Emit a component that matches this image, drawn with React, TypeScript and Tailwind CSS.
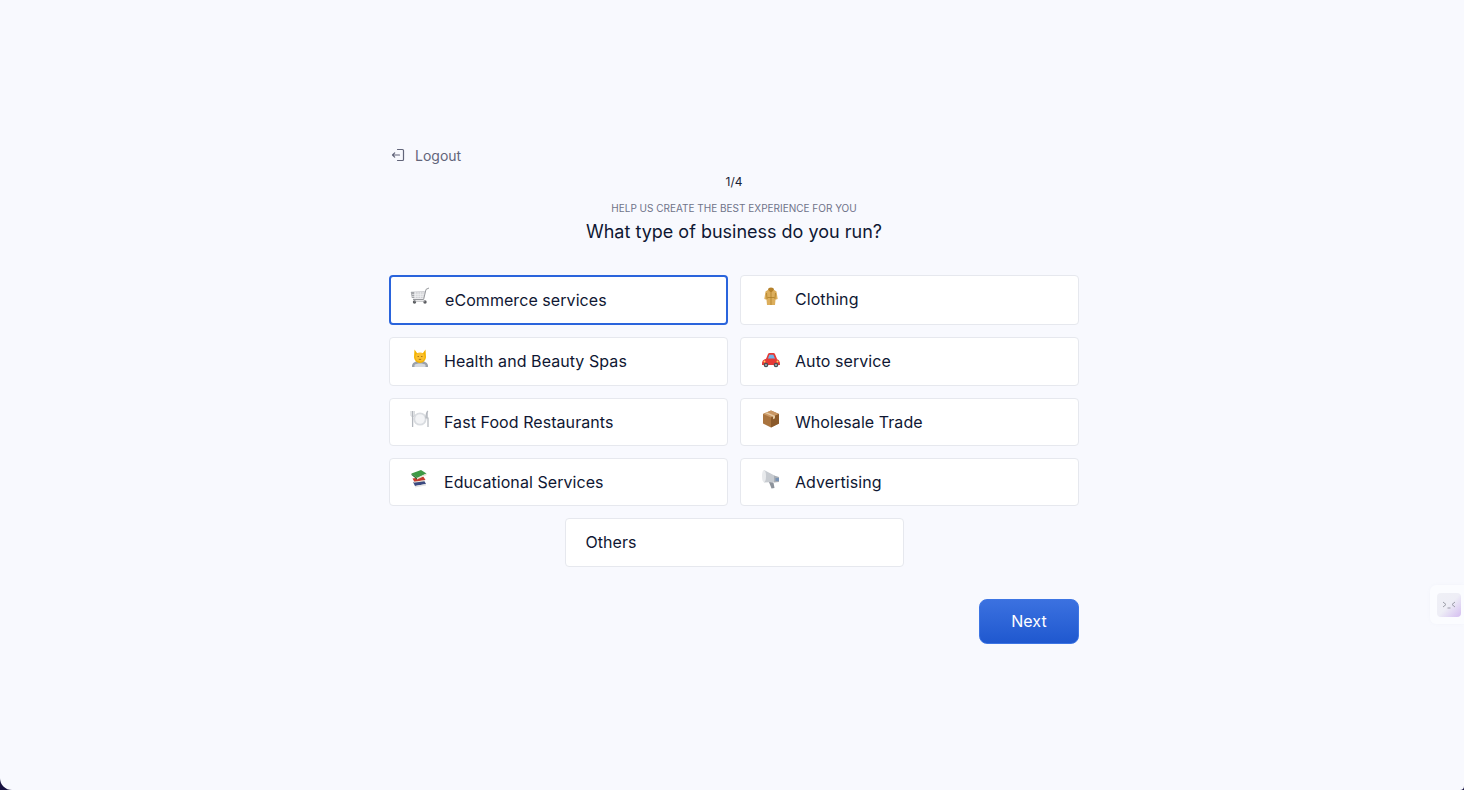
import React from "react";

const Cart = () => (
  <svg width="20" height="18" viewBox="0 0 20 18" fill="none">
    <path d="M1 5 L14.500 4.500 L13.500 11 L3 11 Z" fill="#d8d9dc" stroke="#bcbec2" strokeWidth="0.6" />
    <path d="M1 5h3v6H1.800z" fill="#a3a5a9" />
    <path d="M5.500 5v6M8 5v6M10.500 5v6M13 5v6M2 7.500h12M2 9.500h11.500" stroke="#f2f2f3" strokeWidth="0.6" />
    <path d="M19 1 L16 2.400 L13.600 12.500 L3 12.500" stroke="#96989c" strokeWidth="1" />
    <circle cx="4.500" cy="15" r="1.700" fill="#5c5e62" />
    <circle cx="15" cy="15" r="1.700" fill="#5c5e62" />
    <path d="M4.500 14.200h10.500" stroke="#a6a8ac" strokeWidth="0.8" />
  </svg>
);
const Spa = () => (
  <svg width="20" height="20" viewBox="0 0 20 20" fill="none">
    <path d="M2 18c0-3 3-5 8-5s8 2 8 5v1H2z" fill="#9aa1ab" />
    <path d="M4.500 17c1.500-2 9.500-2 11 0v2h-11z" fill="#d5d8dd" />
    <path d="M4.500 1.500 L7 5h6l2.500-3.500L16 9c0 3-3 6-6 6s-6-3-6-6z" fill="#f4b400" />
    <circle cx="10" cy="9" r="4.600" fill="#fbc02d" />
    <path d="M7.500 8.500h1.500M11 8.500h1.500M8.800 11.400h2.400" stroke="#8a5a12" strokeWidth="0.7" />
  </svg>
);
const Plate = () => (
  <svg width="20" height="20" viewBox="0 0 20 20" fill="none">
    <circle cx="10" cy="10" r="6.600" fill="#d9dce0" />
    <circle cx="10" cy="10" r="4.800" fill="#f3f4f6" />
    <path d="M2.600 2v16" stroke="#b3b7bd" strokeWidth="1.300" />
    <path d="M1 2v4c0 1.200 1 1.700 1.600 1.700S4.200 7.200 4.200 6V2" stroke="#b3b7bd" strokeWidth="0.7" />
    <path d="M18 2c-1.500 1-2 3-2 7h2v9" stroke="#b3b7bd" strokeWidth="1.200" fill="#c9ccd1" />
  </svg>
);
const Books = () => (
  <svg width="20" height="20" viewBox="0 0 20 20" fill="none">
    <path d="M3 13l11-1.500 2 3.500-11 2z" fill="#3b4a80" />
    <path d="M5 17l11-2v1.500L5 18.600z" fill="#e4e4e4" />
    <path d="M2.500 9.500l11-1.800 2 3.300-11 2z" fill="#c63b2f" />
    <path d="M3.500 12.800l11-1.600v1l-11 1.600z" fill="#efe7d6" />
    <path d="M1.500 4.500 L11 1l5.500 3.500L7 9z" fill="#3f9a46" />
    <path d="M1.500 4.500 L7 9v1.600L1.500 6z" fill="#2a6f33" />
    <path d="M7 9l9.500-4.500v1.400L7 10.600z" fill="#e9e4d2" />
  </svg>
);
const Coat = () => (
  <svg width="20" height="20" viewBox="0 0 20 20" fill="none">
    <path d="M7.500 3.500L4.500 5.500 3.300 13l2.200.8L6 19h8l.5-5.200 2.200-.8-1.200-7.500-3-2z" fill="#dcae5c" />
    <path d="M7 3.500C7 .7 13 .7 13 3.500L10 7z" fill="#b5812a" />
    <path d="M10 7v12M6.500 11.500h7M5.500 7l.6 6M14.500 7l-.6 6" stroke="#a8781f" strokeWidth="0.7" />
  </svg>
);
const Car = () => (
  <svg width="20" height="16" viewBox="0 0 20 16" fill="none">
    <path d="M5 7l2-5c.3-.7.800-1 1.500-1h4c.7 0 1.200.3 1.500 1l2 5z" fill="#e53935" />
    <path d="M6.800 7l1.500-4.200h4L14.200 7z" fill="#6fb4e8" />
    <path d="M1 12c0-3 1.500-5 5-5.500h8c3.500.5 5 2.500 5 5.500v1H1z" fill="#e53935" />
    <circle cx="3.500" cy="9.500" r="1" fill="#ffd45c" />
    <circle cx="16.500" cy="9.500" r="1" fill="#ffd45c" />
    <circle cx="5" cy="13" r="2.300" fill="#4a4f55" />
    <circle cx="15" cy="13" r="2.300" fill="#4a4f55" />
    <circle cx="5" cy="13" r="0.900" fill="#b7bbc0" />
    <circle cx="15" cy="13" r="0.900" fill="#b7bbc0" />
  </svg>
);
const Box = () => (
  <svg width="20" height="20" viewBox="0 0 20 20" fill="none">
    <path d="M10 1.500L18 5v9.500L10 18.500 2 14.500V5z" fill="#a9743f" />
    <path d="M2 5l8-3.500L18 5l-8 3.500z" fill="#c99663" />
    <path d="M10 8.500v10L18 14.500V5z" fill="#8b5a2b" />
    <path d="M5.500 3.300l8.500 3.500v2.500l-2 .9V7.500L3.800 4.100z" fill="#e5c9a3" />
  </svg>
);
const Megaphone = () => (
  <svg width="20" height="20" viewBox="0 0 20 20" fill="none">
    <path d="M3 1L13.500 6.500v6.500L3 13.500z" fill="#c7cbd0" />
    <ellipse cx="3" cy="7.200" rx="2" ry="6.200" fill="#e8eaec" />
    <path d="M13 6.500l5 1.500v5l-5 .5z" fill="#a8adb4" />
    <path d="M8 13l4.500.5 1 5.500-3 .5z" fill="#8d939b" />
    <path d="M14.500 9h3.500v3h-3.500z" fill="#7993b5" />
  </svg>
);

const LogoutIcon = () => (
  <svg width="14" height="14" viewBox="0 0 14 14" fill="none" stroke="#62657a" strokeWidth="1.200" strokeLinecap="round" strokeLinejoin="round">
    <path d="M6.500 1.500h5a1 1 0 0 1 1 1v9a1 1 0 0 1-1 1h-5" />
    <path d="M8.500 7H1.500M3.700 4.800 1.500 7l2.200 2.200" />
  </svg>
);

function Option({ icon, label, h, selected = false, nudge = "" }: { icon?: React.ReactNode; label: string; h: string; selected?: boolean; nudge?: string }) {
  return (
    <button
      className={`flex w-[339px] items-center bg-white rounded-[4px] text-left ${h} ${nudge} ${
        selected ? "border-2 border-[#2a64dc] pl-[20px]" : "border border-[#e6e8ee] pl-[20px]"
      }`}
    >
      {icon && <span className={`flex h-[24px] w-[20px] items-start justify-center ${selected ? "mr-[14px] -translate-y-[1px] -translate-x-[1px]" : "mr-[14px] -translate-y-[1px]"}`}>{icon}</span>}
      <span className="text-[16px] leading-[24px] font-normal tracking-[0.004em] text-[#0f1733]">{label}</span>
    </button>
  );
}

export default function App() {
  return (
    <div className="h-[790px] w-[1464px] overflow-hidden bg-[#17123f] font-['Inter',sans-serif]">
      <div className="relative flex h-full w-full justify-center rounded-bl-[12px] rounded-br-[4px] bg-[#f8f9fe] pl-[4px]">
        <div className="flex w-[690px] flex-col pt-[145px]">
          <div className="flex h-[20px] items-center gap-[10px] pl-[2px] text-[14px] text-[#62657a]">
            <LogoutIcon />
            <span>Logout</span>
          </div>
          <div className="mt-[7px] text-center text-[12px] leading-[20px] text-[#1a1f36]">1/4</div>
          <div className="mt-[8px] text-center text-[10px] leading-[16px] text-[#6f7389]">HELP US CREATE THE BEST EXPERIENCE FOR YOU</div>
          <div className="mt-[2px] text-center text-[18px] leading-[28px] text-[#0f1733]">What type of business do you run?</div>
          <div className="mt-[29px] flex flex-col gap-[12px]">
            <div className="flex justify-between">
              <Option icon={<Cart />} label="eCommerce services" h="h-[50px]" selected />
              <Option icon={<Coat />} label="Clothing" h="h-[50px]" nudge="pb-[2px]" />
            </div>
            <div className="flex justify-between">
              <Option icon={<Spa />} label="Health and Beauty Spas" h="h-[49px]" nudge="pb-[1px]" />
              <Option icon={<div className="mt-[4px]"><Car /></div>} label="Auto service" h="h-[49px]" nudge="pb-[1px]" />
            </div>
            <div className="flex justify-between">
              <Option icon={<Plate />} label="Fast Food Restaurants" h="h-[48px]" />
              <Option icon={<Box />} label="Wholesale Trade" h="h-[48px]" />
            </div>
            <div className="flex justify-between">
              <Option icon={<Books />} label="Educational Services" h="h-[48px]" />
              <Option icon={<Megaphone />} label="Advertising" h="h-[48px]" />
            </div>
            <div className="flex justify-center">
              <Option label="Others" h="h-[49px]" nudge="pb-[1px]" />
            </div>
          </div>
          <div className="mt-[32px] flex justify-end">
            <button className="h-[45px] w-[100px] rounded-[8px] border border-[#3d75e4] bg-gradient-to-b from-[#3b71e0] to-[#1f58cf] pb-[2px] text-[16px] font-normal tracking-[0.004em] text-white">
              Next
            </button>
          </div>
        </div>
        <div className="absolute right-0 top-[585px] flex h-[39px] w-[34px] items-center rounded-l-[6px] bg-[#fbfcff] pl-[7px] shadow-[0_0_3px_rgba(200,205,225,0.12)]">
          <div className="flex h-[24px] w-[24px] items-center justify-center rounded-[4px] bg-gradient-to-br from-[#eff0f6] via-[#eeeef6] to-[#d4bdf0]">
            <svg width="14" height="8" viewBox="0 0 14 8" fill="none" stroke="#9a9ca6" strokeWidth="1">
              <path d="M1 1l3 2.500-3 2.500M13 1l-3 2.500 3 2.500M5.500 7h3" />
            </svg>
          </div>
        </div>
      </div>
    </div>
  );
}
